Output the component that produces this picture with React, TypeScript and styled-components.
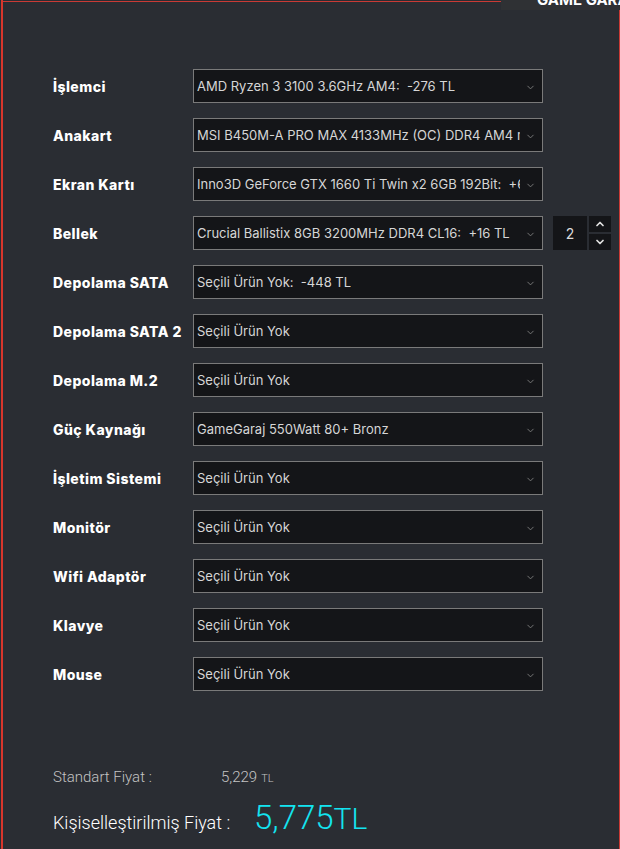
import React from 'react';
import styled, { createGlobalStyle } from 'styled-components';
import { ChevronDown, ChevronUp } from 'lucide-react';

const GlobalStyle = createGlobalStyle`
  html, body {
    margin: 0;
    padding: 0;
    background: #2a2d33;
  }
`;

const Page = styled.div`
  height: 849px;
  box-sizing: border-box;
  margin-left: 1px;
  width: 619px;
  border-left: 2px solid #d8362c;
  display: flex;
  flex-direction: column;
  background: #2a2d33;
  overflow: hidden;
`;

const TopBar = styled.div`
  display: flex;
  height: 10px;
  flex-shrink: 0;
`;

const TopLine = styled.div`
  flex: 1;
  margin-top: 1px;
  height: 1px;
  background: #c93a35;
`;

const Logo = styled.div`
  width: 119px;
  height: 10px;
  background: #2f3134;
  overflow: hidden;
  font-family: 'Inter', sans-serif;
  font-weight: 700;
  font-size: 15px;
  color: #fff;
  line-height: 15px;
  padding-left: 36px;
  box-sizing: border-box;
  white-space: nowrap;

  span {
    display: block;
    margin-top: -8px;
  }
`;

const Body = styled.div`
  flex: 1;
  border-right: 1px solid #c93a35;
  padding: 59px 0 0 50px;
  display: flex;
  flex-direction: column;
`;

const Form = styled.div`
  display: flex;
  flex-direction: column;
  gap: 15px;
`;

const Row = styled.div`
  display: flex;
  align-items: center;
  height: 34px;
`;

const Label = styled.div`
  width: 140px;
  font-family: 'Inter', sans-serif;
  font-weight: 800;
  font-size: 14px;
  letter-spacing: 0.45px;
  color: #fff;
`;

const Select = styled.div`
  width: 350px;
  height: 34px;
  box-sizing: border-box;
  border: 1px solid #7a7a7a;
  background: #141518;
  display: flex;
  align-items: center;
  position: relative;
  padding: 0 22px 0 3px;
`;

const SelectText = styled.div`
  font-family: 'Inter', sans-serif;
  font-size: 13px;
  color: #d6d6d6;
  white-space: pre;
  overflow: hidden;
`;

const Arrow = styled.span`
  position: absolute;
  right: 6px;
  top: 12px;
  color: #7d7d7d;
  display: flex;
`;

const Qty = styled.div`
  width: 34px;
  height: 34px;
  margin-left: 10px;
  background: #141518;
  color: #dcdcdc;
  font-family: 'Inter', sans-serif;
  font-size: 14px;
  display: flex;
  align-items: center;
  justify-content: center;
`;

const Spinner = styled.div`
  display: flex;
  flex-direction: column;
  gap: 2px;
  margin-left: 2px;
`;

const SpinButton = styled.div`
  width: 22px;
  height: 16px;
  background: #141518;
  color: #e0e0e0;
  display: flex;
  align-items: center;
  justify-content: center;
`;

const Summary = styled.div`
  margin-top: 77px;
  display: flex;
  flex-direction: column;
  font-family: 'Roboto', sans-serif;
  font-weight: 300;
`;

const StdLine = styled.div`
  display: flex;
  align-items: baseline;
  color: #c4c4c4;
  font-size: 15px;
`;

const StdLabel = styled.span`
  width: 168px;
`;

const Small = styled.span<{ $size: number }>`
  font-size: ${p => p.$size}px;
  margin-left: 4px;
`;

const CustomLine = styled.div`
  display: flex;
  align-items: baseline;
  margin-top: 12px;
  color: #fff;
  font-size: 18px;
`;

const CustomLabel = styled.span`
  width: 201px;
`;

const BigPrice = styled.span`
  color: #13e4f0;
  font-size: 33px;
`;

const BigUnit = styled.span`
  color: #13e4f0;
  font-size: 30px;
`;

const parts = [
  { label: 'İşlemci', value: 'AMD Ryzen 3 3100 3.6GHz AM4:  -276 TL' },
  { label: 'Anakart', value: 'MSI B450M-A PRO MAX 4133MHz (OC) DDR4 AM4 mATX Anakart' },
  { label: 'Ekran Kartı', value: 'Inno3D GeForce GTX 1660 Ti Twin x2 6GB 192Bit:  +612 TL' },
  { label: 'Bellek', value: 'Crucial Ballistix 8GB 3200MHz DDR4 CL16:  +16 TL', qty: 2 },
  { label: 'Depolama SATA', value: 'Seçili Ürün Yok:  -448 TL' },
  { label: 'Depolama SATA 2', value: 'Seçili Ürün Yok' },
  { label: 'Depolama M.2', value: 'Seçili Ürün Yok' },
  { label: 'Güç Kaynağı', value: 'GameGaraj 550Watt 80+ Bronz' },
  { label: 'İşletim Sistemi', value: 'Seçili Ürün Yok' },
  { label: 'Monitör', value: 'Seçili Ürün Yok' },
  { label: 'Wifi Adaptör', value: 'Seçili Ürün Yok' },
  { label: 'Klavye', value: 'Seçili Ürün Yok' },
  { label: 'Mouse', value: 'Seçili Ürün Yok' },
];

const App: React.FC = () => {
  return (
    <>
      <GlobalStyle />
      <Page>
        <TopBar>
          <TopLine />
          <Logo><span>GAME GARAJ</span></Logo>
        </TopBar>
        <Body>
          <Form>
            {parts.map(p => (
              <Row key={p.label}>
                <Label>{p.label}</Label>
                <Select>
                  <SelectText>{p.value}</SelectText>
                  <Arrow><ChevronDown size={11} strokeWidth={2} /></Arrow>
                </Select>
                {p.qty && (
                  <>
                    <Qty>{p.qty}</Qty>
                    <Spinner>
                      <SpinButton><ChevronUp size={12} strokeWidth={3.5} /></SpinButton>
                      <SpinButton><ChevronDown size={12} strokeWidth={3.5} /></SpinButton>
                    </Spinner>
                  </>
                )}
              </Row>
            ))}
          </Form>
          <Summary>
            <StdLine>
              <StdLabel>Standart Fiyat :</StdLabel>
              <span>5,229</span>
              <Small $size={11}>TL</Small>
            </StdLine>
            <CustomLine>
              <CustomLabel>Kişiselleştirilmiş Fiyat :</CustomLabel>
              <BigPrice>5,775</BigPrice>
              <BigUnit>TL</BigUnit>
            </CustomLine>
          </Summary>
        </Body>
      </Page>
    </>
  );
};

export default App;
